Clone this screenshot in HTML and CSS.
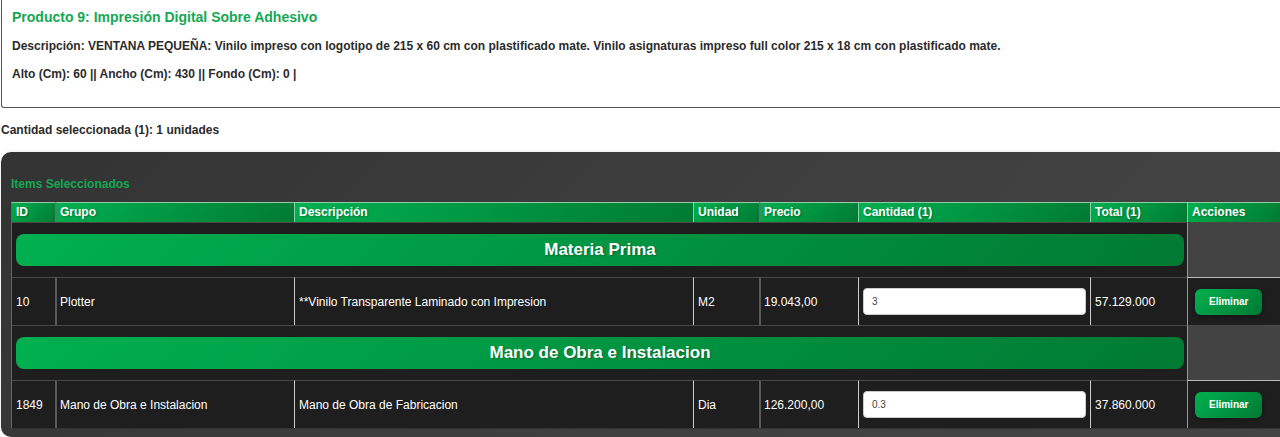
FILE: index.html
```html
<!DOCTYPE html>
<html lang="es">
<head>
<meta charset="utf-8">
<title>Items Seleccionados</title>
<link rel="stylesheet" href="styles.css">
</head>
<body>
<section class="product">
  <h1 class="product-title">Producto 9: Impresión Digital Sobre Adhesivo</h1>
  <p class="product-line">Descripción: VENTANA PEQUEÑA: Vinilo impreso con logotipo de 215 x 60 cm con plastificado mate. Vinilo asignaturas impreso full color 215 x 18 cm con plastificado mate.</p>
  <p class="product-line">Alto (Cm): 60 || Ancho (Cm): 430 || Fondo (Cm): 0 |</p>
</section>
<p class="quantity">Cantidad seleccionada (1): 1 unidades</p>
<section class="panel">
  <h2 class="panel-title">Items Seleccionados</h2>
  <table class="items">
    <colgroup>
      <col class="col-id"><col class="col-group"><col><col class="col-unit"><col class="col-price"><col class="col-qty"><col class="col-total"><col class="col-actions">
    </colgroup>
    <thead>
      <tr><th>ID</th><th class="thick">Grupo</th><th>Descripción</th><th>Unidad</th><th class="thick">Precio</th><th>Cantidad (1)</th><th>Total (1)</th><th>Acciones</th></tr>
    </thead>
    <tbody>
      <tr><td class="group" colspan="7"><h3 class="group-title">Materia Prima</h3></td><td class="blank"></td></tr>
      <tr>
        <td>10</td><td class="thick">Plotter</td><td>**Vinilo Transparente Laminado con Impresion</td><td>M2</td><td class="thick">19.043,00</td>
        <td><input class="qty" type="text" aria-label="Cantidad Vinilo Transparente" value="3"></td>
        <td>57.129.000</td><td class="actions"><button class="remove" type="button">Eliminar</button></td>
      </tr>
      <tr><td class="group" colspan="7"><h3 class="group-title">Mano de Obra e Instalacion</h3></td><td class="blank"></td></tr>
      <tr>
        <td>1849</td><td class="thick">Mano de Obra e Instalacion</td><td>Mano de Obra de Fabricacion</td><td>Dia</td><td class="thick">126.200,00</td>
        <td><input class="qty" type="text" aria-label="Cantidad Mano de Obra" value="0.3"></td>
        <td>37.860.000</td><td class="actions"><button class="remove" type="button">Eliminar</button></td>
      </tr>
    </tbody>
  </table>
</section>
</body>
</html>
```
FILE: styles.css
```css
* { box-sizing: border-box; }
body {
  margin: 0;
  background: #fff;
  color: #2b2b2b;
  font: 12px/16px "Liberation Sans", Arial, sans-serif;
  overflow-x: hidden;
}
h1, h2, h3, p { margin: 0; }
.product {
  display: flex;
  flex-direction: column;
  gap: 12px;
  margin-left: 1px;
  padding: 8px 10px 25px;
  border: solid #555;
  border-width: 0 0 1px 1px;
  border-radius: 0 0 0 3px;
}
.product-title { font-size: 14px; line-height: 18px; color: #14a853; }
.product-line, .quantity { font-weight: bold; }
.quantity { padding: 14px 1px; }
.panel {
  margin-left: 1px;
  padding: 24px 0 8px 10px;
  border-radius: 10px 0 0 10px;
  background: linear-gradient(135deg, #333, #404040 60%, #444);
  box-shadow: 0 0 4px rgba(0, 0, 0, .1);
}
.panel-title { padding-bottom: 10px; font-size: 12px; line-height: 16px; color: #14a853; }
.items {
  width: 100%;
  table-layout: fixed;
  border-collapse: separate;
  border-spacing: 0;
  border-bottom: 1px solid #333;
  color: #fff;
}
.col-id { width: 44px; }
.col-group { width: 239px; }
.col-unit { width: 66px; }
.col-price { width: 99px; }
.col-qty { width: 232px; }
.col-total { width: 97px; }
.col-actions { width: 93px; }
.items th, .items td {
  padding: 0 4px;
  border: solid #ccc;
  border-width: 1px 0 0 1px;
  text-align: left;
}
.items th {
  height: 20px;
  line-height: 19px;
  border-color: #8fcca8;
  background: linear-gradient(135deg, #00b050, #007a33);
  background-origin: border-box;
  text-shadow: 1px 1px 2px rgba(0, 0, 0, .3);
}
.items td { height: 48px; border-top-color: #484848; background: #1e1e1e; }
.items .thick { padding-left: 3px; border-left: 2px solid #595959; }
.items th.thick { border-left-color: #438760; }
.items th:first-child, .items td:first-child { border-left-color: #666; }
.items td:last-child { border-left-color: #999; }
.items .group { height: 55px; padding-right: 3px; }
.items .blank { background: transparent; }
.items .actions { padding-left: 7px; border-top-color: #bbb; }
.group-title {
  padding: 6px;
  border-radius: 8px;
  background: linear-gradient(135deg, #00b050, #007a33);
  font-size: 17px;
  line-height: 20px;
  text-align: center;
  text-shadow: 1px 1px 2px rgba(0, 0, 0, .3);
}
.qty {
  display: block;
  width: 100%;
  height: 27px;
  padding: 0 8px;
  border: 1px solid #ccc;
  border-radius: 4px;
  background: #fff;
  color: #444;
  font: 10px "Liberation Sans", Arial, sans-serif;
}
.remove {
  display: block;
  padding: 6px 14px;
  border: 0;
  border-radius: 6px;
  background: linear-gradient(135deg, #00b050, #007a33);
  box-shadow: 0 2px 5px rgba(0, 0, 0, .3);
  color: #fff;
  font: bold 10px/14px "Liberation Sans", Arial, sans-serif;
}
```
